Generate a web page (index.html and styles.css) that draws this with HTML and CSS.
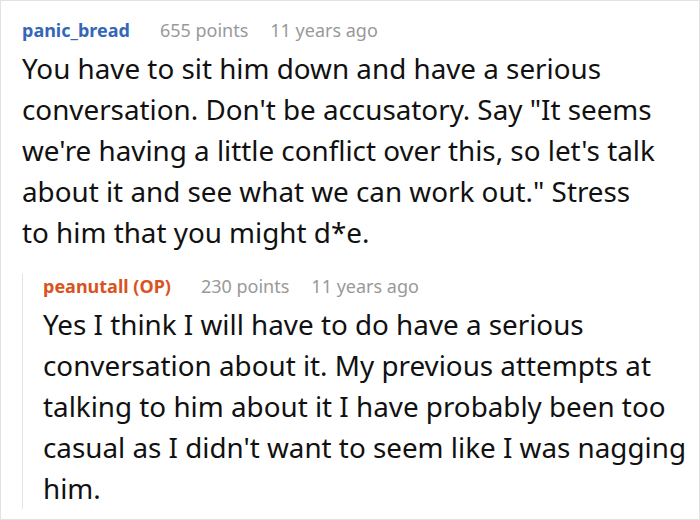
FILE: index.html
```html
<!DOCTYPE html>
<html>
<head>
<meta charset="utf-8">
<link rel="stylesheet" href="styles.css">
</head>
<body>
<div class="frame">
  <div class="comment">
    <div class="meta">
      <span class="author">panic_bread</span>
      <span class="score">655 points</span>
      <span class="time">11 years ago</span>
    </div>
    <p class="body">You have to sit him down and have a serious conversation. Don't be accusatory. Say "It seems we're having a little conflict over this, so let's talk about it and see what we can work out." Stress to&nbsp;him that you might d*e.</p>
    <div class="reply">
      <div class="meta">
        <span class="author op">peanutall (OP)</span>
        <span class="score">230 points</span>
        <span class="time">11 years ago</span>
      </div>
      <p class="body">Yes I think I will have to do have a serious conversation about it. My previous attempts at talking to him about it I have probably been too casual as I didn't want to seem like I was nagging him.</p>
    </div>
  </div>
</div>
</body>
</html>
```

FILE: styles.css
```css
html, body {
  margin: 0;
  padding: 0;
  background: #fff;
}
.frame {
  box-sizing: border-box;
  width: 700px;
  height: 520px;
  border: 1px solid #e2e2e2;
  overflow: hidden;
  font-family: "Noto Sans", sans-serif;
}
.comment {
  padding: 17px 8px 0 21px;
}
.meta {
  display: flex;
  align-items: baseline;
  font-size: 18px;
  line-height: 24px;
  color: #999;
}
.author {
  font-weight: bold;
  color: #3467b8;
  margin-right: 30px;
}
.author.op {
  color: #d9531e;
}
.score {
  margin-right: 22px;
}
.body {
  margin: 6px 0 0;
  font-size: 27.8px;
  line-height: 41px;
  color: #111;
}
.comment > .body {
  padding-right: 20px;
}
.reply {
  margin-top: 30px;
  border-left: 1px solid #e4e4e4;
  padding-left: 20px;
}
.reply .meta {
  margin-top: -9px;
}
.reply .body {
  margin-bottom: -7px;
}
```
